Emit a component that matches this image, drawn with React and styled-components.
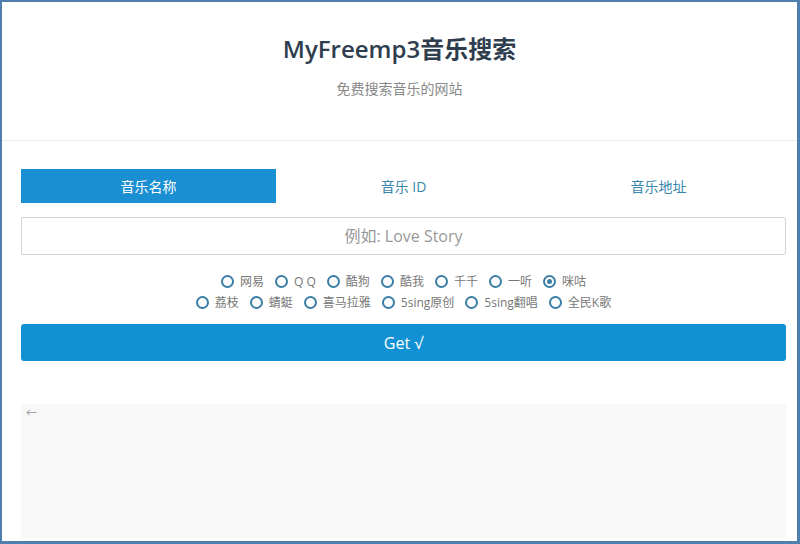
import React, { useState } from "react";
import styled, { createGlobalStyle } from "styled-components";

const GlobalStyle = createGlobalStyle`
  * { box-sizing: border-box; }
  body {
    margin: 0;
    font-family: "Open Sans", "Noto Sans CJK SC", sans-serif;
    background: #fff;
  }
`;

const tabs = ["音乐名称", "音乐 ID", "音乐地址"];

const sources = [
  ["网易", "Q Q", "酷狗", "酷我", "千千", "一听", "咪咕"],
  ["荔枝", "蜻蜓", "喜马拉雅", "5sing原创", "5sing翻唱", "全民K歌"],
];

const App = () => {
  const [tab, setTab] = useState(0);
  const [source, setSource] = useState("咪咕");

  return (
    <Frame>
      <GlobalStyle />
      <Header>
        <Title>MyFreemp3音乐搜索</Title>
        <Subtitle>免费搜索音乐的网站</Subtitle>
      </Header>
      <Main>
        <Tabs>
          {tabs.map((t, i) => (
            <Tab key={t} active={i === tab} onClick={() => setTab(i)}>
              {t}
            </Tab>
          ))}
        </Tabs>
        <SearchInput placeholder="例如: Love Story" />
        <Sources>
          {sources.map((row, r) => (
            <SourceRow key={r}>
              {row.map((s) => (
                <Radio key={s} onClick={() => setSource(s)}>
                  <Dot checked={s === source} />
                  <span>{s}</span>
                </Radio>
              ))}
            </SourceRow>
          ))}
        </Sources>
        <GetButton>Get √</GetButton>
        <Result>
          <Back>←</Back>
        </Result>
      </Main>
    </Frame>
  );
};

export default App;

const Frame = styled.div`
  height: 544px;
  border: 2px solid #4f7fae;
  border-right-width: 3px;
  border-bottom-width: 3px;
  display: flex;
  flex-direction: column;
  overflow: hidden;
`;

const Header = styled.header`
  height: 139px;
  flex-shrink: 0;
  border-bottom: 1px solid #ececec;
  display: flex;
  flex-direction: column;
  align-items: center;
  padding-top: 31px;
`;

const Title = styled.h1`
  margin: 0;
  font-size: 24px;
  line-height: 32px;
  font-weight: 600;
  color: #2f3e4e;
`;

const Subtitle = styled.p`
  margin: 14px 0 0;
  font-size: 14px;
  line-height: 20px;
  color: #888;
`;

const Main = styled.main`
  flex: 1;
  padding: 28px 11px 0 19px;
  display: flex;
  flex-direction: column;
`;

const Tabs = styled.div`
  display: grid;
  grid-template-columns: repeat(3, 1fr);
  height: 34px;
`;

const Tab = styled.div`
  display: flex;
  align-items: center;
  justify-content: center;
  font-size: 14px;
  cursor: pointer;
  background: ${(p) => (p.active ? "#1a8fd1" : "transparent")};
  color: ${(p) => (p.active ? "#fff" : "#3887ab")};
`;

const SearchInput = styled.input`
  margin-top: 14px;
  height: 38px;
  width: 100%;
  flex-shrink: 0;
  border: 1px solid #d4d4d4;
  border-radius: 2px;
  text-align: center;
  font-family: inherit;
  font-size: 16px;
  color: #555;
  outline: none;
  &::placeholder {
    color: #999;
  }
`;

const Sources = styled.div`
  margin-top: 17px;
  display: flex;
  flex-direction: column;
  gap: 3px;
`;

const SourceRow = styled.div`
  display: flex;
  justify-content: center;
  gap: 11px;
  height: 18px;
`;

const Radio = styled.label`
  display: flex;
  align-items: center;
  gap: 6px;
  font-size: 12px;
  color: #777;
  cursor: pointer;
`;

const Dot = styled.span`
  width: 13px;
  height: 13px;
  border-radius: 50%;
  border: 2px solid #3a7ea6;
  display: flex;
  align-items: center;
  justify-content: center;
  &::after {
    content: "";
    width: 5px;
    height: 5px;
    border-radius: 50%;
    background: ${(p) => (p.checked ? "#3a7ea6" : "transparent")};
  }
`;

const GetButton = styled.button`
  margin-top: 13px;
  height: 37px;
  width: 100%;
  flex-shrink: 0;
  border: none;
  border-radius: 3px;
  background: #1191d3;
  color: #fff;
  font-family: inherit;
  font-size: 16px;
  cursor: pointer;
`;

const Result = styled.div`
  margin-top: 43px;
  flex: 1;
  margin-bottom: 3px;
  background: #f8f8f8;
  padding: 0 5px;
  line-height: 14px;
`;

const Back = styled.span`
  font-size: 11px;
  color: #999;
`;
